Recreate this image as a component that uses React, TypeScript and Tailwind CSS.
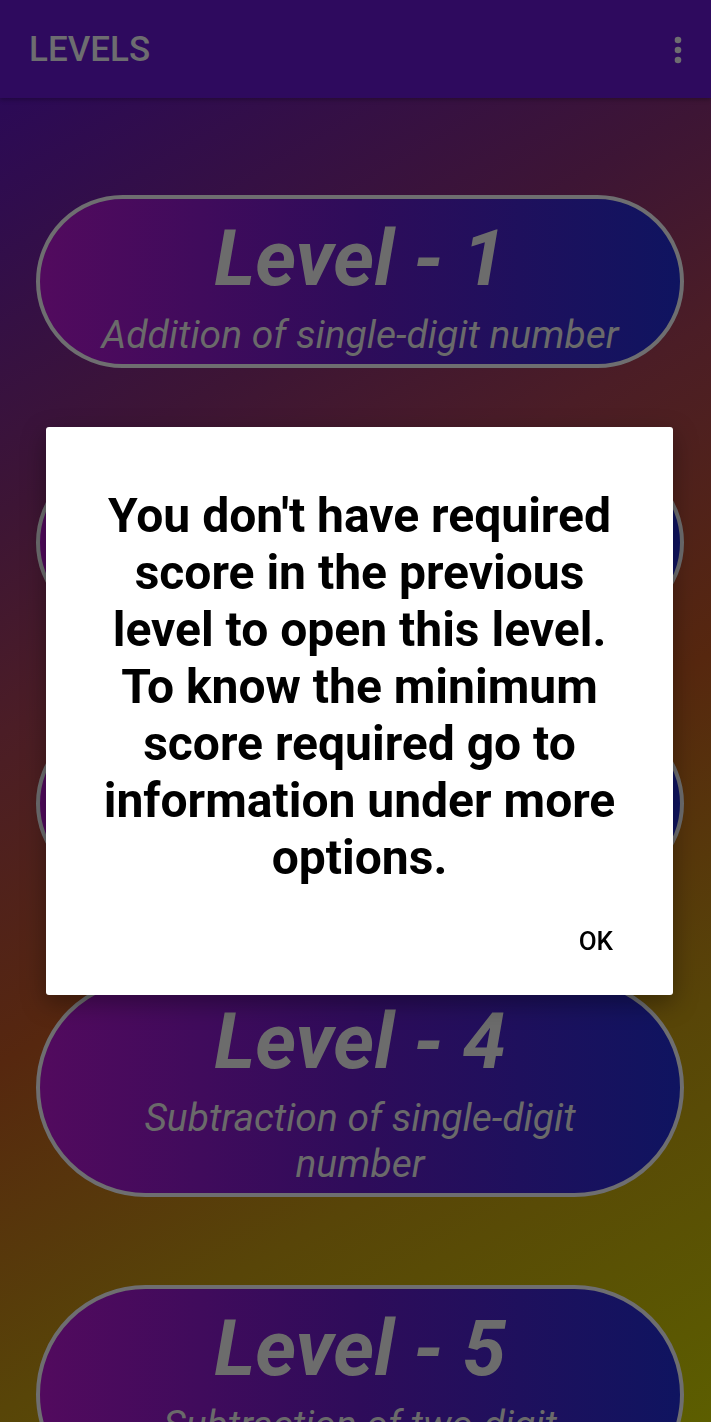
import React from "react";

const levels = [
  { n: 1, lines: ["Addition of single-digit number"] },
  { n: 2, lines: ["Addition of two-digit number"] },
  { n: 3, lines: ["Addition of three-digit number"] },
  { n: 4, lines: ["Subtraction of single-digit", "number"] },
  { n: 5, lines: ["Subtraction of two-digit", "number"] },
];

function Pill({ n, lines }: { n: number; lines: string[] }) {
  return (
    <div className="flex flex-col items-center rounded-full border-[4px] border-[#6e6e70] bg-[linear-gradient(to_right,#520a5e_0%,#2e0c5a_50%,#0f1460_100%)] pb-[6px] pt-[14px] text-center">
      <div className="whitespace-nowrap text-[78px] font-bold italic leading-[91px] text-[#6c6c6c]">
        Level - {n}
      </div>
      <div className="mt-[8px] flex flex-col items-center">
        {lines.map((l, i) => (
          <div
            key={i}
            className="whitespace-nowrap text-[39px] italic leading-[46px] text-[#6a6a6a]"
          >
            {l}
          </div>
        ))}
      </div>
    </div>
  );
}

export default function App() {
  return (
    <div className="relative h-[1422px] w-[711px] overflow-hidden bg-[linear-gradient(150deg,#27075e_0%,#3d1535_28%,#4b1d26_40%,#56270f_58%,#584508_77%,#5c5e00_100%)] font-['Roboto','Liberation_Sans',sans-serif]">
      <header className="flex h-[98px] items-center justify-between bg-[#2e0a5e] pl-[29px] pr-[29px] shadow-[0_2px_4px_rgba(0,0,0,0.25)]">
        <span className="text-[35px] font-medium leading-none text-[#6d6d70]">LEVELS</span>
        <svg width="8" height="28" viewBox="0 0 8 28" className="mt-[1px]">
          <circle cx="4" cy="4" r="3.3" fill="#6d6d70" />
          <circle cx="4" cy="14" r="3.3" fill="#6d6d70" />
          <circle cx="4" cy="24" r="3.3" fill="#6d6d70" />
        </svg>
      </header>

      <div className="flex flex-col gap-[88px] pl-[36px] pr-[27px] pt-[97px]">
        {levels.map((lv) => (
          <Pill key={lv.n} n={lv.n} lines={lv.lines} />
        ))}
      </div>

      <div className="fixed inset-0 flex items-center justify-center pl-[8px]">
        <div className="flex h-[568px] w-[627px] flex-col rounded-[3px] bg-white shadow-[0_8px_24px_rgba(0,0,0,0.35)]">
          <p className="whitespace-nowrap pt-[60px] text-center text-[48px] font-bold leading-[57px] text-black">
            You don't have required
            <br />
            score in the previous
            <br />
            level to open this level.
            <br />
            To know the minimum
            <br />
            score required go to
            <br />
            information under more
            <br />
            options.
          </p>
          <div className="mt-[31px] flex justify-end pr-[60px]">
            <button className="flex h-[48px] items-center text-[26px] font-medium leading-none text-black">
              OK
            </button>
          </div>
        </div>
      </div>
    </div>
  );
}
